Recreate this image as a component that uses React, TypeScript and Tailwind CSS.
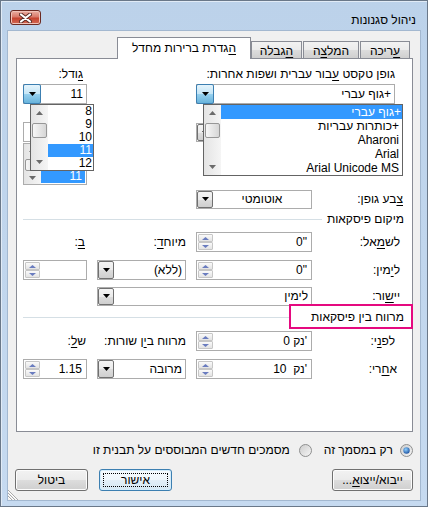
import React from 'react';

const font = '"Liberation Sans", "DejaVu Sans", Arial, sans-serif';

const U = ({ children }: { children: React.ReactNode }) => (
  <span className="underline underline-offset-2">{children}</span>
);

function Arrow({ up = false, color = '#000', w = 7, h = 4 }: { up?: boolean; color?: string; w?: number; h?: number }) {
  return (
    <svg width={w} height={h} viewBox={`0 0 ${w} ${h}`} className="block">
      <path d={up ? `M0 ${h}L${w / 2} 0L${w} ${h}Z` : `M0 0H${w}L${w / 2} ${h}Z`} fill={color} />
    </svg>
  );
}

function DropBtn({ blue = false }: { blue?: boolean }) {
  return (
    <div
      className={
        blue
          ? '-my-px -ml-px flex w-[18px] shrink-0 items-center justify-center rounded-[2px] border border-[#3c7fb1] bg-[linear-gradient(to_bottom,#e5f4fc_0%,#c4e5f6_50%,#98d1ef_50%,#68b3db_100%)]'
          : 'flex w-[16px] shrink-0 items-center justify-center rounded-[2px] border border-[#707070] bg-[linear-gradient(to_bottom,#f4f4f4_0%,#ebebeb_50%,#dddddd_50%,#cfcfcf_100%)]'
      }
    >
      <Arrow />
    </div>
  );
}

function Combo({ value, w, blue, center, h = 'h-[20px]' }: { value: string; w: string; blue?: boolean; center?: boolean; h?: string }) {
  return (
    <div className={`flex ${h} ${w} border border-[#acacac] bg-white`}>
      <DropBtn blue={blue} />
      <div dir="rtl" className={`flex flex-1 items-center ${center ? 'justify-center' : 'justify-start pr-[3px]'}`}>
        <span>{value}</span>
      </div>
    </div>
  );
}

function SpinHalf({ up }: { up?: boolean }) {
  return (
    <div className="flex flex-1 items-center justify-center rounded-[1px] border border-[#c6c6c6] bg-linear-to-b from-[#fafafa] to-[#e3e3e3]">
      <Arrow up={up} w={7} h={3} color="#6a7cbf" />
    </div>
  );
}

// value is given in the order it is drawn, left to right
function Spin({ value, w }: { value: string; w: string }) {
  return (
    <div className={`flex h-[20px] ${w} border border-[#acacac] bg-white p-px`}>
      <div className="flex w-[15px] flex-col">
        <SpinHalf up />
        <SpinHalf />
      </div>
      <div className="flex flex-1 items-center justify-end pr-[3px]">
        <bdo dir="ltr" className="whitespace-pre">
          {value}
        </bdo>
      </div>
    </div>
  );
}

function Scroll({ h }: { h: string }) {
  return (
    <div className={`flex w-[17px] shrink-0 flex-col items-center bg-linear-to-r from-[#e4e4e4] to-[#f5f5f5] ${h}`}>
      <div className="flex h-[16px] items-center justify-center">
        <Arrow up w={7} h={4} color="#6b6b6b" />
      </div>
      <div className="mt-[2px] h-[15px] w-[15px] rounded-[2px] border border-[#979797] bg-linear-to-r from-[#f7f7f7] to-[#d6d6d6]" />
      <div className="flex-1" />
      <div className="flex h-[16px] items-center justify-center">
        <Arrow w={7} h={4} color="#6b6b6b" />
      </div>
    </div>
  );
}

function Radio({ checked, id }: { checked?: boolean; id: string }) {
  return (
    <svg width="13" height="13" viewBox="0 0 13 13" className="block shrink-0">
      <defs>
        <linearGradient id={id} x1="0" y1="0" x2="1" y2="1">
          <stop offset="0" stopColor="#cbcbcb" />
          <stop offset="1" stopColor="#f7f7f7" />
        </linearGradient>
        <radialGradient id={id + 'd'} cx="0.4" cy="0.35" r="0.7">
          <stop offset="0" stopColor="#8fd0ff" />
          <stop offset="1" stopColor="#1a4f9e" />
        </radialGradient>
      </defs>
      <circle cx="6.5" cy="6.5" r="6" fill={`url(#${id})`} stroke="#8e8f8f" />
      {checked && <circle cx="6.5" cy="6.5" r="3.2" fill={`url(#${id}d)`} />}
    </svg>
  );
}

function Btn({ children, w, def }: { children: React.ReactNode; w: string; def?: boolean }) {
  return (
    <div
      className={`relative flex h-[22px] items-center justify-center rounded-[3px] border ${w} ${
        def
          ? 'border-[#3c7fb1] bg-[linear-gradient(to_bottom,#f6fbfe_0%,#eef6fb_50%,#e2eef6_50%,#d6e8f3_100%)] shadow-[inset_0_0_0_1px_#d4ecfa]'
          : 'border-[#707070] bg-[linear-gradient(to_bottom,#f2f2f2_0%,#ebebeb_50%,#dddddd_50%,#cfcfcf_100%)] shadow-[inset_0_0_0_1px_#fcfcfc]'
      }`}
    >
      {def && <div className="absolute inset-[3px] border border-dotted border-black" />}
      <span dir="rtl">{children}</span>
    </div>
  );
}

function Tab({ children, w }: { children: React.ReactNode; w: string }) {
  return (
    <div
      dir="rtl"
      className={`flex h-[17px] items-center justify-center border border-b-0 border-[#898c95] bg-[linear-gradient(to_bottom,#f2f2f2_0%,#ebebeb_50%,#dddddd_50%,#cfcfcf_100%)] pt-[1px] ${w}`}
    >
      {children}
    </div>
  );
}

export default function App() {
  const fonts = ['+גוף עברי', '+כותרות עבריות', 'Aharoni', 'Arial', 'Arial Unicode MS'];
  const sizes = ['8', '9', '10', '11', '12'];

  return (
    <div
      className="flex h-[507px] w-[428px] flex-col border border-[#6a7889] bg-linear-to-b from-[#bcd2ea] to-[#c6daf0] text-[12px] leading-[14px] text-black shadow-[inset_1px_1px_0_#e1ebf6]"
      style={{ fontFamily: font }}
    >
      {/* title bar */}
      <div className="flex h-[30px] items-start justify-between">
        <div className="ml-[9px] mt-[9px] flex h-[15px] w-[31px] items-center justify-center rounded-[3px] border border-[#6b2a22] bg-[linear-gradient(to_bottom,#eab0a3_0%,#d9796a_45%,#c4432f_55%,#d46a55_100%)] shadow-[inset_0_0_0_1px_#f0c2b8]">
          <svg width="13" height="10" viewBox="0 0 13 10">
            <path d="M2 1.5L11 8.5M11 1.5L2 8.5" stroke="#5a2a24" strokeWidth="4" strokeLinecap="round" />
            <path d="M2 1.5L11 8.5M11 1.5L2 8.5" stroke="#ffffff" strokeWidth="2.2" strokeLinecap="round" />
          </svg>
        </div>
        <div dir="rtl" className="mr-[11px] mt-[12px] text-[12px]">
          ניהול סגנונות
        </div>
      </div>

      {/* client area */}
      <div className="relative mx-[7px] flex h-[469px] flex-col bg-[#f0f0f0] shadow-[0_0_0_1px_#a3b8d0]">
        {/* tabs */}
        <div className="mt-[6px] flex h-[21px] items-end justify-end pr-[10px]">
          <div
            dir="rtl"
            className="relative z-10 -mb-px flex h-[22px] w-[134px] items-center justify-center border border-b-0 border-[#898c95] bg-white pb-[1px]"
          >
            <span>
              <U>ה</U>גדרת ברירות מחדל
            </span>
          </div>
          <Tab w="w-[51px]">
            <span>
              <U>ה</U>גבלה
            </span>
          </Tab>
          <div className="ml-[1px]">
            <Tab w="w-[56px]">
              <span>
                המל<U>צ</U>ה
              </span>
            </Tab>
          </div>
          <div className="ml-[1px]">
            <Tab w="w-[50px]">
              <span>
                <U>ע</U>ריכה
              </span>
            </Tab>
          </div>
        </div>

        {/* tab panel */}
        <div className="relative ml-[8px] flex h-[374px] w-[397px] flex-col border border-[#898c95] bg-white">
          {/* labels row */}
          <div className="mt-[8px] flex h-[14px] items-center pl-[6px]">
            <div dir="rtl" className="w-[64px] pr-[4px] text-right">
              <U>ג</U>ודל:
            </div>
            <div dir="rtl" className="ml-[109px] flex-1 pr-[17px] text-right">
              גופן טקסט <U>ע</U>בור עברית ושפות אחרות:
            </div>
          </div>

          {/* combos row */}
          <div className="mt-[3px] flex h-[20px] pl-[6px]">
            <Combo w="w-[64px]" value="11" blue />
            <div className="ml-[109px]">
              <Combo w="w-[199px]" value="+גוף עברי" blue />
            </div>
          </div>

          <div className="h-[85px]" />

          {/* font colour */}
          <div className="flex h-[20px] items-center pl-[6px]">
            <div className="ml-[173px]">
              <Combo w="w-[116px]" value="אוטומטי" center h="h-[19px]" />
            </div>
            <div dir="rtl" className="flex-1 pr-[9px] text-right">
              <U>צ</U>בע גופן:
            </div>
          </div>

          {/* section: placement */}
          <div className="mt-[3px] flex h-[14px] items-center pl-[6px]">
            <div className="h-px flex-1 bg-[#d5dfe5]" />
            <div dir="rtl" className="pl-[5px] pr-[8px]">
              מיקום פיסקאות
            </div>
          </div>

          {/* left */}
          <div className="mt-[6px] flex h-[20px] items-center pl-[6px]">
            <div dir="rtl" className="w-[64px] pr-[2px] text-right">
              <U>ב</U>:
            </div>
            <div dir="rtl" className="ml-[10px] w-[89px] text-right">
              מיוח<U>ד</U>:
            </div>
            <div className="ml-[10px]">
              <Spin w="w-[116px]" value={'0"'} />
            </div>
            <div dir="rtl" className="flex-1 pr-[12px] text-right">
              לש<U>מ</U>אל:
            </div>
          </div>

          {/* right */}
          <div className="mt-[8px] flex h-[20px] items-center pl-[6px]">
            <Spin w="w-[64px]" value="" />
            <div className="ml-[10px]">
              <Combo w="w-[89px]" value="(ללא)" />
            </div>
            <div className="ml-[10px]">
              <Spin w="w-[116px]" value={'0"'} />
            </div>
            <div dir="rtl" className="flex-1 pr-[12px] text-right">
              ל<U>י</U>מין:
            </div>
          </div>

          {/* alignment */}
          <div className="mt-[6px] flex h-[20px] items-center pl-[6px]">
            <div className="ml-[74px]">
              <Combo w="w-[215px]" value="לימין" h="h-[19px]" />
            </div>
            <div dir="rtl" className="flex-1 pr-[12px] text-right">
              יי<U>ש</U>ור:
            </div>
          </div>

          {/* section: spacing */}
          <div className="mt-[4px] flex h-[14px] items-center pl-[6px]">
            <div className="h-px flex-1 bg-[#d5dfe5]" />
            <div dir="rtl" className="w-[123px] pr-[8px] text-right">
              מרווח בין פיסקאות
            </div>
          </div>

          {/* before */}
          <div className="mt-[7px] flex h-[20px] items-center pl-[6px]">
            <div dir="rtl" className="w-[64px] pr-[1px] text-right">
              ש<U>ל</U>:
            </div>
            <div dir="rtl" className="ml-[10px] w-[89px] text-right">
              מרווח ב<U>י</U>ן שורות:
            </div>
            <div className="ml-[10px]">
              <Spin w="w-[116px]" value="0 קנ'" />
            </div>
            <div dir="rtl" className="flex-1 pr-[17px] text-right">
              לפ<U>נ</U>י:
            </div>
          </div>

          {/* after */}
          <div className="mt-[8px] flex h-[20px] items-center pl-[6px]">
            <Spin w="w-[64px]" value="1.15" />
            <div className="ml-[10px]">
              <Combo w="w-[89px]" value="מרובה" />
            </div>
            <div className="ml-[10px]">
              <Spin w="w-[116px]" value="10  קנ'" />
            </div>
            <div dir="rtl" className="flex-1 pr-[15px] text-right">
              א<U>ח</U>רי:
            </div>
          </div>

          {/* highlight box around the spacing header */}
          <div className="absolute left-[272px] top-[245px] h-[25px] w-[124px] border-2 border-[#e5097f]" />

          {/* things left behind the open lists */}
          <div className="absolute left-[6px] top-[63px] h-[20px] w-[64px] border border-[#acacac] bg-white" />
          <div className="absolute left-[6px] top-[84px] flex h-[42px] w-[64px] border border-[#acacac] bg-white">
            <Scroll h="h-[40px]" />
            <div className="flex flex-1 flex-col justify-end pb-px pr-px">
              <div className="h-[13px] bg-[#3399ff] pr-[3px] text-right leading-[13px] text-white">11</div>
            </div>
          </div>
          <div className="absolute left-[179px] top-[64px]">
            <Combo w="w-[116px]" value="" h="h-[19px]" />
          </div>

          {/* open font list */}
          <div className="absolute left-[186px] top-[45px] z-20 flex h-[72px] w-[200px] border border-[#646464] bg-white">
            <Scroll h="h-[70px]" />
            <div className="flex flex-1 flex-col">
              {fonts.map((f, i) => (
                <div
                  key={f}
                  dir="rtl"
                  className={
                    i === 0
                      ? 'h-[14px] bg-[#3399ff] pr-[1px] text-right leading-[14px] text-white'
                      : 'h-[14px] pr-[3px] text-right leading-[14px]'
                  }
                >
                  {f}
                </div>
              ))}
            </div>
          </div>

          {/* open size list */}
          <div className="absolute left-[13px] top-[45px] z-20 flex h-[67px] w-[64px] border border-[#646464] bg-white">
            <Scroll h="h-[65px]" />
            <div className="flex flex-1 flex-col">
              {sizes.map((s) => (
                <div
                  key={s}
                  className={
                    s === '11'
                      ? 'h-[13px] bg-[#3399ff] pr-[1px] text-right leading-[13px] text-white'
                      : 'h-[13px] pr-[1px] text-right leading-[13px]'
                  }
                >
                  {s}
                </div>
              ))}
            </div>
          </div>
        </div>

        {/* scope radios */}
        <div className="mt-[10px] flex h-[16px] items-center justify-end pr-[7px]">
          <span dir="rtl">מסמכים חדשים המבוססים על תבנית זו</span>
          <div className="ml-[9px]">
            <Radio id="r2" />
          </div>
          <span dir="rtl" className="ml-[12px]">
            רק במסמך זה
          </span>
          <div className="ml-[7px]">
            <Radio id="r1" checked />
          </div>
        </div>

        {/* buttons */}
        <div className="mt-[11px] flex h-[22px] items-center px-[7px]">
          <Btn w="w-[73px]">ביטול</Btn>
          <div className="ml-[11px]">
            <Btn w="w-[73px]" def>
              אישור
            </Btn>
          </div>
          <div className="flex-1" />
          <Btn w="w-[81px]">
            ייבוא/ייצו<U>א</U>...
          </Btn>
        </div>

        {/* size grip */}
        <svg width="11" height="11" viewBox="0 0 11 11" className="absolute bottom-0 left-0">
          <path d="M0 1L10 11M0 4L7 11M0 7L4 11" stroke="#a8a8a8" strokeWidth="1" />
          <path d="M0 2L9 11M0 5L6 11M0 8L3 11" stroke="#ffffff" strokeWidth="1" />
        </svg>
      </div>
    </div>
  );
}
